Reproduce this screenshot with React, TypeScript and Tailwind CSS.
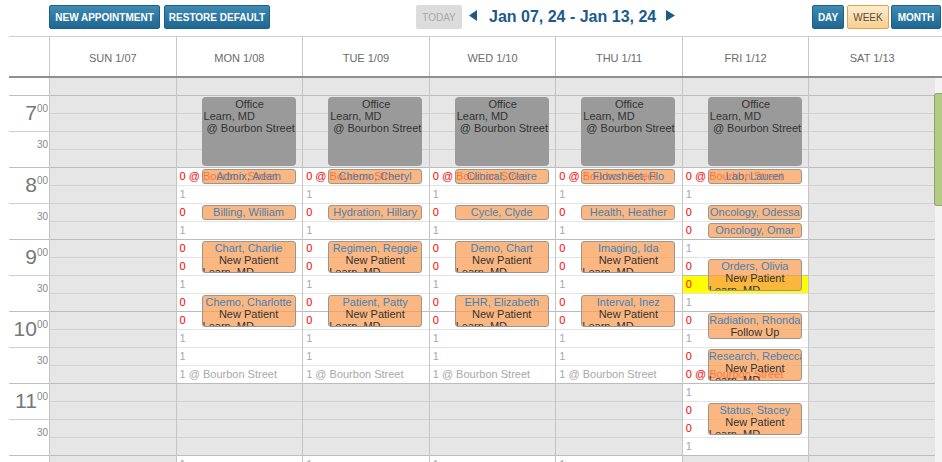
import { Fragment } from "react";

const DAYS = ["SUN 1/07", "MON 1/08", "TUE 1/09", "WED 1/10", "THU 1/11", "FRI 1/12", "SAT 1/13"];
const HOURS = [7, 8, 9, 10, 11, 12];

// Open-slot counters from 8:00 on, "@" marks the location row.
const WEEKDAY = "0@ 1 0 1 0 0 1 0 0 1 1 1@".split(" ");
const FRIDAY = "0@ 1 0 0 1 0 0 1 0 1 0 0@ 1 0 0 1".split(" ");

type Mark = { n: string; at: boolean };
type Slot = { open: boolean; mark?: Mark; now?: boolean };

function slotsFor(day: number): Slot[] {
  const out: Slot[] = [];
  for (let i = 0; i < 21; i++) {
    if (day === 0 || day === 6) {
      out.push({ open: false });
      continue;
    }
    const codes = day === 5 ? FRIDAY : WEEKDAY;
    const k = i - 4;
    if (k >= 0 && k < codes.length) {
      const c = codes[k];
      out.push({ open: true, mark: { n: c[0], at: c.endsWith("@") }, now: day === 5 && i === 10 });
    } else if (day !== 5 && i === 20) {
      out.push({ open: true, mark: { n: "1", at: false } });
    } else {
      out.push({ open: false });
    }
  }
  return out;
}

type Appt = { day: number; slot: number; h: number; name: string; note?: string; doc?: boolean };

const APPTS: Appt[] = [
  { day: 1, slot: 4, h: 15, name: "Admix, Adam" },
  { day: 1, slot: 6, h: 15, name: "Billing, William" },
  { day: 1, slot: 8, h: 32, name: "Chart, Charlie", note: "New Patient", doc: true },
  { day: 1, slot: 11, h: 32, name: "Chemo, Charlotte", note: "New Patient", doc: true },
  { day: 2, slot: 4, h: 15, name: "Chemo, Cheryl" },
  { day: 2, slot: 6, h: 15, name: "Hydration, Hillary" },
  { day: 2, slot: 8, h: 32, name: "Regimen, Reggie", note: "New Patient", doc: true },
  { day: 2, slot: 11, h: 32, name: "Patient, Patty", note: "New Patient", doc: true },
  { day: 3, slot: 4, h: 15, name: "Clinical, Claire" },
  { day: 3, slot: 6, h: 15, name: "Cycle, Clyde" },
  { day: 3, slot: 8, h: 32, name: "Demo, Chart", note: "New Patient", doc: true },
  { day: 3, slot: 11, h: 32, name: "EHR, Elizabeth", note: "New Patient", doc: true },
  { day: 4, slot: 4, h: 15, name: "Flowsheet, Flo" },
  { day: 4, slot: 6, h: 15, name: "Health, Heather" },
  { day: 4, slot: 8, h: 32, name: "Imaging, Ida", note: "New Patient", doc: true },
  { day: 4, slot: 11, h: 32, name: "Interval, Inez", note: "New Patient", doc: true },
  { day: 5, slot: 4, h: 15, name: "Lab, Lauren" },
  { day: 5, slot: 6, h: 15, name: "Oncology, Odessa" },
  { day: 5, slot: 7, h: 15, name: "Oncology, Omar" },
  { day: 5, slot: 9, h: 32, name: "Orders, Olivia", note: "New Patient", doc: true },
  { day: 5, slot: 12, h: 26, name: "Radiation, Rhonda", note: "Follow Up" },
  { day: 5, slot: 14, h: 32, name: "Research, Rebecca", note: "New Patient", doc: true },
  { day: 5, slot: 17, h: 32, name: "Status, Stacey", note: "New Patient", doc: true },
];

function slotClass(s: Slot, i: number) {
  const hour = i % 4 === 0;
  if (s.now) return "border-[#bcbcbc] bg-[#ffff00]";
  if (s.open) return hour ? "border-[#bcbcbc] bg-white" : "border-[#e4e4e4] bg-white";
  return hour ? "border-[#bcbcbc] bg-[#e6e6e6]" : "border-[#d2d2d2] bg-[#e6e6e6]";
}

function SlotMark({ mark }: { mark: Mark }) {
  const red = mark.n === "0";
  return (
    <>
      <span className={red ? "text-[#ff0000]" : "text-[#a3aab3]"}>{mark.n}</span>
      {mark.at && <span className={red ? "text-[#ff0000]" : "text-[#a8a8a8]"}> @ Bourbon Street</span>}
    </>
  );
}

function DayColumn({ day }: { day: number }) {
  const slots = slotsFor(day);
  const appts = APPTS.filter((a) => a.day === day);
  return (
    <div className="border-l border-[#c4c4c4]">
      <div className="h-[17px] bg-[#e6e6e6]" />
      <div className="relative">
        {slots.map((s, i) => (
          <div
            key={i}
            className={`h-[18px] overflow-hidden whitespace-nowrap border-t pl-[3px] text-[11px] leading-[17px] ${slotClass(s, i)}`}
          >
            {s.mark && <SlotMark mark={s.mark} />}
          </div>
        ))}

        {day >= 1 && day <= 5 && (
          <div className="absolute left-[25px] top-[2px] h-[69px] w-[94px] overflow-hidden whitespace-nowrap rounded-[4px] bg-[#9a9a9a] pl-[2px] pt-[1px] text-[11px] leading-[12px] text-[#333]">
            <div className="text-center">Office</div>
            <div>Learn, MD</div>
            <div>&nbsp;@ Bourbon Street</div>
          </div>
        )}

        {appts.map((a) => (
          <div
            key={a.name}
            className={`absolute left-[25px] w-[94px] overflow-hidden whitespace-nowrap rounded-[3px] border border-[#9c9690] bg-[rgba(249,155,82,0.72)] text-[11px] ${
              a.note ? "leading-[12px]" : "leading-[13px]"
            }`}
            style={{ top: a.slot * 18 + 2, height: a.h }}
          >
            <div className="text-center text-[#4682b4]">{a.name}</div>
            {a.note && <div className="text-center text-[#333]">{a.note}</div>}
            {a.doc && <div className="text-[#333]">Learn, MD</div>}
          </div>
        ))}
      </div>
    </div>
  );
}

function Toolbar() {
  const blue =
    "flex h-[24px] items-center justify-center rounded-[2px] border border-[#1d5f86] bg-linear-to-b from-[#3e8bb3] to-[#1d6792] text-[10px] font-bold text-white";
  return (
    <div className="flex h-[36px] items-start pl-[49px] pt-[5px]">
      <div className={`${blue} w-[111px]`}>NEW APPOINTMENT</div>
      <div className={`${blue} ml-[4px] w-[106px]`}>RESTORE DEFAULT</div>

      <div className="ml-[146px] flex h-[24px] items-center">
        <div className="flex h-[24px] w-[46px] items-center justify-center rounded-[2px] bg-[#dcdcdc] text-[10px] text-[#a9a9a9]">
          TODAY
        </div>
        <svg width="8" height="11" viewBox="0 0 8 11" className="ml-[7px] -mt-[3px]">
          <polygon points="8,0 8,11 0,5.5" fill="#1b5b8b" />
        </svg>
        <span className="ml-[12px] text-[16px] font-bold text-[#1b5b8b]">Jan 07, 24 - Jan 13, 24</span>
        <svg width="9" height="11" viewBox="0 0 9 11" className="ml-[10px] -mt-[3px]">
          <polygon points="0,0 0,11 9,5.5" fill="#1b5b8b" />
        </svg>
      </div>

      <div className="ml-auto mr-[1px] flex">
        <div className={`${blue} w-[32px]`}>DAY</div>
        <div className="ml-[3px] flex h-[24px] w-[42px] items-center justify-center rounded-[2px] border border-[#e3a24e] bg-linear-to-b from-[#fdedcd] to-[#f8cf8f] text-[10px] text-[#5a4c3c]">
          WEEK
        </div>
        <div className={`${blue} ml-[2px] w-[50px]`}>MONTH</div>
      </div>
    </div>
  );
}

export default function App() {
  return (
    <div className="h-[462px] w-[942px] overflow-hidden bg-white font-['Liberation_Sans',Arial,sans-serif]">
      <Toolbar />
      <div className="ml-[9px]">
        <div className="grid h-[42px] grid-cols-[40px_repeat(7,minmax(0,1fr))_7px] border-b-2 border-t border-b-[#8f8f8f] border-t-[#cfcfcf]">
          <div />
          {DAYS.map((d) => (
            <div
              key={d}
              className="flex items-center justify-center border-l border-[#c8c8c8] pt-[3px] text-[11px] text-[#6b6b6b]"
            >
              {d}
            </div>
          ))}
          <div />
        </div>

        <div className="grid grid-cols-[40px_repeat(7,minmax(0,1fr))_7px]">
          <div>
            <div className="h-[17px]" />
            {HOURS.map((h) => (
              <Fragment key={h}>
                <div className="flex h-[36px] items-start justify-end border-t border-[#bfbfbf] pr-[1px] pt-[6px] text-[#777]">
                  <span className="text-[21px] leading-[21px]">{h}</span>
                  <span className="mt-[2px] text-[10px] leading-[10px] text-[#888]">00</span>
                </div>
                <div className="flex h-[36px] items-start justify-end border-t border-[#cfcfcf] pr-[1px] pt-[8px] text-[10px] leading-[10px] text-[#888]">
                  30
                </div>
              </Fragment>
            ))}
          </div>

          {DAYS.map((d, i) => (
            <DayColumn key={d} day={i} />
          ))}

          <div className="bg-[#f3f3f3]">
            <div className="relative -ml-px mt-[15px] h-[113px] w-[8px] rounded-l-[3px] border border-r-0 border-[#8ea664] bg-[#b3cb86]" />
          </div>
        </div>
      </div>
    </div>
  );
}
